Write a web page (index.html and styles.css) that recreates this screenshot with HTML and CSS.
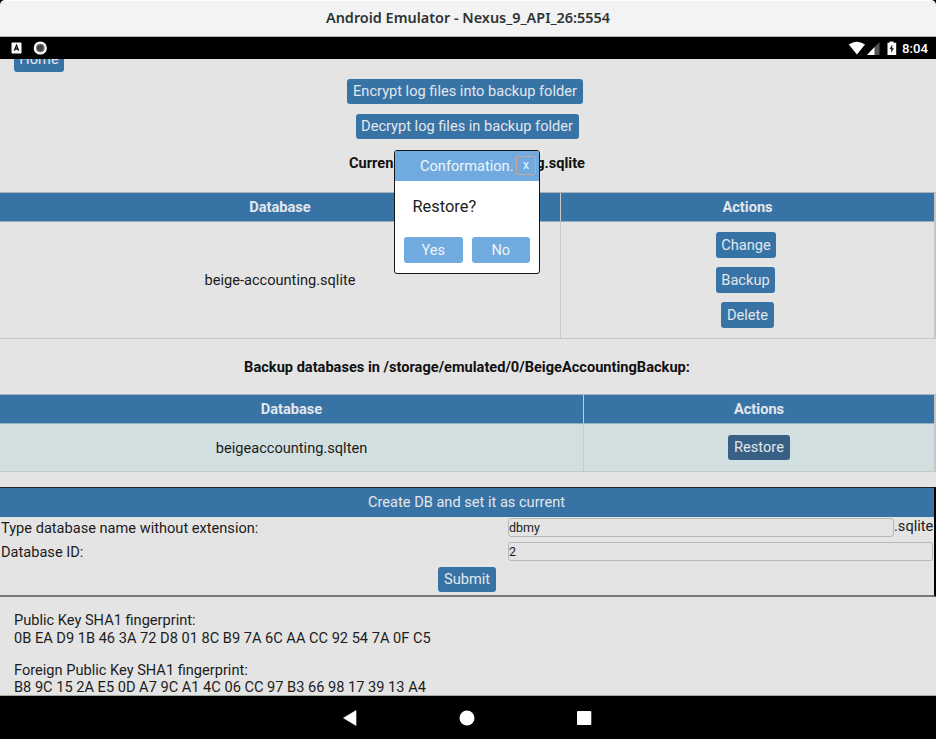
FILE: index.html
```html
<!DOCTYPE html>
<html lang="en">
<head>
<meta charset="utf-8">
<title>Android Emulator</title>
<link rel="stylesheet" href="styles.css">
</head>
<body>
<header class="titlebar">
  <svg class="title" width="936" height="35"><text x="326" y="22" textLength="284" lengthAdjust="spacingAndGlyphs">Android Emulator - Nexus_9_API_26:5554</text></svg>
</header>
<div class="status">
  <svg class="notif" width="36" height="14" viewBox="0 0 36 14">
    <rect x=".5" y="1.5" width="10" height="11" rx="1" fill="#fff"/>
    <path d="M3.3 9.8 5.5 4.2 7.7 9.8M4 8h3" fill="none" stroke="#111" stroke-width="1.3"/>
    <circle cx="29.300" cy="7" r="6.6" fill="#fff"/><circle cx="29.300" cy="7" r="4" fill="#444" stroke="#888" stroke-width="1"/>
  </svg>
  <div class="tray">
    <svg width="49" height="15" viewBox="0 0 49 15">
      <path d="M.8 3.4Q8.800-2 17 3.400L8.900 13.600Z" fill="#fff"/>
      <path d="M19 14 31.500 1V14Z" fill="#555"/><path d="M19 14 26.500 6V14Z" fill="#fff"/>
      <path d="M39.500 1.800h2V.5h4v1.300h2.700V14h-8.700V1.800Z" fill="#fff"/>
      <path d="M44.300 3.500 41.500 8h1.700v3.800L46 7.300h-1.700Z" fill="#222"/>
    </svg>
    <span class="clock">8:04</span>
  </div>
</div>
<main class="page">
  <div class="home-row"><button class="btn">Home</button></div>
  <div class="log-actions">
    <button class="btn encrypt">Encrypt log files into backup folder</button>
    <button class="btn decrypt">Decrypt log files in backup folder</button>
  </div>
  <h3 class="heading current"><span>Curren</span><span>g.sqlite</span></h3>
  <section class="grid current-grid">
    <div class="cell head">Database</div>
    <div class="cell head">Actions</div>
    <div class="cell">beige-accounting.sqlite</div>
    <div class="cell actions">
      <button class="btn change">Change</button>
      <button class="btn backup">Backup</button>
      <button class="btn delete">Delete</button>
    </div>
  </section>
  <h3 class="heading backups">Backup databases in /storage/emulated/0/BeigeAccountingBackup:</h3>
  <section class="grid backup-grid">
    <div class="cell head">Database</div>
    <div class="cell head">Actions</div>
    <div class="cell tinted">beigeaccounting.sqlten</div>
    <div class="cell tinted restore-cell"><button class="btn restore">Restore</button></div>
  </section>
  <form class="create">
    <div class="create-head">Create DB and set it as current</div>
    <div class="field"><label>Type database name without extension:</label><input value="dbmy"><span class="ext">.sqlite</span></div>
    <div class="field second"><label>Database ID:</label><input value="2"></div>
    <div class="submit-row"><button type="button" class="btn submit">Submit</button></div>
  </form>
  <div class="keys">
    <p>Public Key SHA1 fingerprint:<br>0B EA D9 1B 46 3A 72 D8 01 8C B9 7A 6C AA CC 92 54 7A 0F C5</p>
    <p>Foreign Public Key SHA1 fingerprint:<br>B8 9C 15 2A E5 0D A7 9C A1 4C 06 CC 97 B3 66 98 17 39 13 A4</p>
  </div>
</main>
<nav class="nav">
  <svg width="250" height="18" viewBox="0 0 250 18" fill="#fff">
    <path d="M1.500 9 14 1.500V16.500Z" stroke="#fff" stroke-width=".6" stroke-linejoin="round"/>
    <circle cx="125" cy="9" r="7.500"/>
    <rect x="235" y="2" width="14.300" height="14" rx=".8"/>
  </svg>
</nav>
<div class="dialog">
  <div class="dialog-head"><span>Conformation.</span><button class="close">x</button></div>
  <div class="question">Restore?</div>
  <div class="choices"><button>Yes</button><button>No</button></div>
</div>
</body>
</html>
```
FILE: styles.css
```css
* { box-sizing: border-box; }
body {
  margin: 0;
  width: 936px;
  height: 739px;
  overflow: hidden;
  background: #000;
  color: #1c1c1c;
  font: 14.6px/17.5px Roboto, sans-serif;
}
button, input { font: inherit; margin: 0; border: 0; }
.titlebar {
  height: 37px;
  background: #f3f3f3;
  border-top: 1px solid #fff;
  border-bottom: 1px solid #b5b2ac;
  border-radius: 5px 5px 0 0;
}
.title { display: block; }
.title text { font: 600 14.6px "Noto Sans", sans-serif; fill: #2e3436; }
.status {
  height: 22px;
  display: flex;
  align-items: center;
  justify-content: space-between;
  padding: 0 8px 0 11px;
  color: #fff;
}
.tray { display: flex; align-items: center; gap: 5px; }
.clock { font-size: 13.2px; font-weight: 500; width: 26px; padding-top: 1px; }
.page {
  height: 637px;
  overflow: hidden;
  background: #e4e4e4;
  border-bottom: 1px solid #a3a8a4;
}
.btn {
  display: block;
  height: 25px;
  padding: 1px 0 0;
  border-radius: 3px;
  background: #3873a6;
  color: #e2e7ec;
  text-align: center;
  white-space: nowrap;
}
.home-row { display: flow-root; height: 20px; padding-left: 14px; }
.home-row .btn { width: 50px; margin-top: -12px; }
.log-actions { display: flex; flex-direction: column; align-items: center; gap: 10px; height: 60px; padding-right: 2px; }
.encrypt { width: 236px; margin-right: 4px; }
.decrypt { width: 223px; }
.heading { margin: 0; font-size: 14.6px; line-height: 18px; font-weight: 700; color: #111; }
.current { display: flex; justify-content: space-between; height: 53px; margin: 0 351px 0 349px; padding-top: 15px; }
.grid { display: grid; width: 936px; border-top: 1px solid #a9b3bb; border-right: 2px solid #c6c6c6; }
.current-grid { grid-template-columns: 561px 1fr; grid-template-rows: 29px 117px; }
.backup-grid { grid-template-columns: 584px 1fr; grid-template-rows: 29px 48px; }
.cell {
  display: flex;
  align-items: center;
  justify-content: center;
  padding-top: 2px;
  border-bottom: 1px solid #c8c8c8;
}
.cell:nth-child(odd) { border-right: 1px solid #c8cacb; }
.head { padding-top: 1px; background: #3873a6; color: #e2e7ec; font-weight: 700; border-bottom-color: #94afc4; }
.actions { flex-direction: column; gap: 9px; padding-top: 0; }
.change { width: 60px; margin-right: 3px; height: 26px; }
.backup { width: 59px; margin-right: 4px; height: 26px; }
.delete { width: 53px; height: 26px; }
.backups { height: 55px; padding: 19px 2px 0 0; text-align: center; }
.tinted { background: #d1dfe0; border-bottom-color: #c3c9c6; }
.restore-cell { padding-top: 0; }
.restore { width: 62px; background: #385f84; }
.create {
  height: 110px;
  margin: 15px 0 0;
  border: 1px solid #222;
  border-color: #222 #000 #777;
  border-width: 1px 2px 2px 0;
}
.create-head { height: 29px; padding: 6px 1px 0 0; background: #3873a6; color: #e2e7ec; text-align: center; }
.field { display: flex; height: 23px; padding: 1px 0 0; }
.field label { width: 507px; margin-left: 1px; padding-top: 2px; }
.field input {
  flex: 1;
  min-width: 0;
  height: 19px;
  padding: 0;
  border: 1px solid #b8b8b8;
  border-radius: 3px;
  background: transparent;
  color: #222;
  font-size: 12.5px;
}
.ext { width: 40px; }
.second { height: 24px; padding-top: 2px; padding-right: 1px; }
.submit-row { padding: 3px 0 0 438px; }
.submit { width: 58px; }
.keys { padding: 15px 14px 0; }
.keys p { margin: 0 0 14.500px; }
.nav { height: 43px; display: flex; justify-content: center; align-items: center; padding-right: 2px; }
.dialog {
  position: absolute;
  left: 394px;
  top: 150px;
  width: 146px;
  height: 124px;
  overflow: hidden;
  background: #fff;
  border: 1px solid #161616;
  border-radius: 3px;
}
.dialog-head {
  display: flex;
  align-items: center;
  justify-content: space-between;
  height: 30px;
  padding: 1px 3px 0 25px;
  background: #71aade;
  color: #edf5fc;
}
.close {
  width: 20px;
  height: 19px;
  margin-top: -2px;
  padding: 0;
  border: 1.5px solid #cda594;
  border-radius: 2px;
  background: transparent;
  color: #edf5fc;
  font-size: 12.2px;
  line-height: 15px;
}
.question { height: 56px; padding: 16px 0 0 17.500px; font-size: 16.4px; line-height: 19px; }
.choices { display: flex; gap: 9px; padding-left: 9px; }
.choices button { width: 58.500px; height: 26px; padding: 1px 0 0; border-radius: 3px; background: #71aade; color: #edf5fc; }
```
